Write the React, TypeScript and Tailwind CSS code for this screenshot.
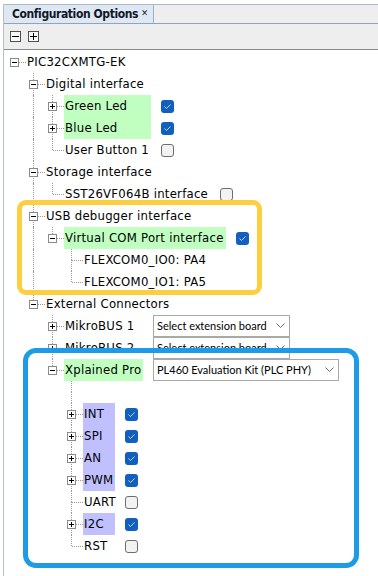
import React from "react";

type Row = {
  d: number;
  label: string;
  handle?: "minus" | "plus";
  next?: boolean;
  anc: boolean[];
  labelCls?: string;
  check?: "on" | "off";
  select?: { text: string; cls: string };
  blank?: boolean;
};

const rows: Row[] = [
  { d: 0, label: "PIC32CXMTG-EK", handle: "minus", anc: [] },
  { d: 1, label: "Digital interface", handle: "minus", next: true, anc: [false] },
  { d: 2, label: "Green Led", handle: "plus", next: true, anc: [false, true], labelCls: "w-[87px] bg-[#c0ffc0]", check: "on" },
  { d: 2, label: "Blue Led", handle: "plus", next: true, anc: [false, true], labelCls: "w-[87px] bg-[#c0ffc0]", check: "on" },
  { d: 2, label: "User Button 1", next: false, anc: [false, true], labelCls: "w-[87px]", check: "off" },
  { d: 1, label: "Storage interface", handle: "minus", next: true, anc: [false] },
  { d: 2, label: "SST26VF064B interface", next: false, anc: [false, true], labelCls: "w-[146px]", check: "off" },
  { d: 1, label: "USB debugger interface", handle: "minus", next: true, anc: [false] },
  { d: 2, label: "Virtual COM Port interface", handle: "minus", next: false, anc: [false, true], labelCls: "w-[162px] bg-[#c0ffc0]", check: "on" },
  { d: 3, label: "FLEXCOM0_IO0: PA4", next: true, anc: [false, true, false] },
  { d: 3, label: "FLEXCOM0_IO1: PA5", next: false, anc: [false, true, false] },
  { d: 1, label: "External Connectors", handle: "minus", next: false, anc: [false] },
  { d: 2, label: "MikroBUS 1", handle: "plus", next: true, anc: [false, false], labelCls: "w-[79px]", select: { text: "Select extension board", cls: "w-[137px]" } },
  { d: 2, label: "MikroBUS 2", handle: "plus", next: true, anc: [false, false], labelCls: "w-[79px]", select: { text: "Select extension board", cls: "w-[137px]" } },
  { d: 2, label: "Xplained Pro", handle: "minus", next: false, anc: [false, false], labelCls: "w-[79px] bg-[#c0ffc0]", select: { text: "PL460 Evaluation Kit (PLC PHY)", cls: "w-[186px]" } },
  { d: 3, label: "", next: true, anc: [false, false, false], blank: true },
  { d: 3, label: "INT", handle: "plus", next: true, anc: [false, false, false], labelCls: "w-[32px] bg-[#c0c0ff]", check: "on" },
  { d: 3, label: "SPI", handle: "plus", next: true, anc: [false, false, false], labelCls: "w-[32px] bg-[#c0c0ff]", check: "on" },
  { d: 3, label: "AN", handle: "plus", next: true, anc: [false, false, false], labelCls: "w-[32px] bg-[#c0c0ff]", check: "on" },
  { d: 3, label: "PWM", handle: "plus", next: true, anc: [false, false, false], labelCls: "w-[32px] bg-[#c0c0ff]", check: "on" },
  { d: 3, label: "UART", next: true, anc: [false, false, false], labelCls: "w-[32px]", check: "off" },
  { d: 3, label: "I2C", handle: "plus", next: true, anc: [false, false, false], labelCls: "w-[32px] bg-[#c0c0ff]", check: "on" },
  { d: 3, label: "RST", next: false, anc: [false, false, false], labelCls: "w-[32px]", check: "off" },
];

function HandleBox({ kind }: { kind: "minus" | "plus" }) {
  return (
    <div className="absolute left-[5px] top-[7px] w-[9px] h-[9px] border border-[#8a8a8a] bg-white">
      <div className="absolute left-[1px] top-[3px] w-[5px] h-[1px] bg-black" />
      {kind === "plus" && <div className="absolute left-[3px] top-[1px] w-[1px] h-[5px] bg-black" />}
    </div>
  );
}

function CheckBox({ on }: { on: boolean }) {
  if (on) {
    return (
      <div className="w-[13px] h-[13px] rounded-[3px] bg-[#1160c0] flex items-center justify-center shrink-0">
        <svg width="13" height="13" viewBox="0 0 13 13">
          <polyline points="3.5,6.5 5.5,8.5 9.5,4.5" fill="none" stroke="#d6e4fa" strokeWidth="0.9" />
        </svg>
      </div>
    );
  }
  return <div className="w-[13px] h-[13px] rounded-[3px] bg-[#f2f2f2] border border-[#6e6e6e] shrink-0" />;
}

function Select({ text, cls }: { text: string; cls: string }) {
  return (
    <div
      className={`${cls} ml-[10px] h-[22px] border border-[#a9a9a9] bg-white flex items-center justify-between pl-[3px] pr-[4px] shrink-0 text-[11px] text-black tracking-normal`}
      style={{ fontFamily: "Lato, 'Open Sans', sans-serif", fontStretch: "normal" }}
    >
      <span className="whitespace-nowrap">{text}</span>
      <svg width="9" height="6" viewBox="0 0 9 6" className="shrink-0">
        <polyline points="0.5,0.5 4.5,4.5 8.5,0.5" fill="none" stroke="#6a6a6a" strokeWidth="1" />
      </svg>
    </div>
  );
}

function TreeRow({ r }: { r: Row }) {
  const dot = "border-dotted border-[#9a9a9a]";
  return (
    <div className="flex h-[22px] items-center">
      {r.anc.map((on, i) => (
        <div key={i} className="relative w-[19px] h-full shrink-0">
          {on && <div className={`absolute left-[9px] top-0 bottom-0 border-l ${dot}`} />}
        </div>
      ))}
      <div className="relative w-[21px] h-full shrink-0">
        {r.d > 0 && <div className={`absolute left-[9px] top-0 h-[11px] border-l ${dot}`} />}
        {r.d > 0 && r.next && <div className={`absolute left-[9px] top-[11px] bottom-0 border-l ${dot}`} />}
        {!r.blank && <div className={`absolute left-[10px] right-0 top-[11px] border-t ${dot}`} />}
        {r.handle && <HandleBox kind={r.handle} />}
      </div>
      {!r.blank && (
        <div className={`${r.labelCls ?? ""} h-full flex items-center pl-[1px] shrink-0 whitespace-nowrap`}>
          {r.label}
        </div>
      )}
      {r.check && (
        <div className="ml-[10px]">
          <CheckBox on={r.check === "on"} />
        </div>
      )}
      {r.select && <Select text={r.select.text} cls={r.select.cls} />}
    </div>
  );
}

export default function App() {
  return (
    <div
      className="relative w-[378px] h-[576px] bg-white overflow-hidden text-[13px] text-black tracking-[0.25px]"
      style={{ fontFamily: "'DejaVu Sans Condensed', 'DejaVu Sans', sans-serif", fontStretch: "condensed" }}
    >
      <div className="ml-[3px] mt-[4px] h-[572px] border-l border-[#b8bfc8] flex flex-col">
        {/* tab header */}
        <div className="h-[20px] bg-[#eeeeee] border-t border-b border-t-[#a9bace] border-b-[#8ea4bd] flex">
          <div className="h-full bg-[#dfe7f3] border-r border-[#9fb0c6] flex items-center pl-[8px] pr-[5px] w-[150px]">
            <span className="font-bold text-[12px] tracking-[-0.4px] text-[#101828] whitespace-nowrap">Configuration Options</span>
            <span className="ml-auto font-bold text-[9px] text-[#222] tracking-normal">✕</span>
          </div>
        </div>
        {/* toolbar */}
        <div className="h-[26px] bg-[#eeeeee] border-b border-[#8a8a8a] flex items-center gap-[7px] pl-[6px]">
          <div className="relative w-[11px] h-[11px] border border-[#505050] bg-[#fafafa]">
            <div className="absolute left-[1px] top-[4px] w-[7px] h-[1px] bg-black" />
          </div>
          <div className="relative w-[11px] h-[11px] border border-[#505050] bg-[#fafafa]">
            <div className="absolute left-[1px] top-[4px] w-[7px] h-[1px] bg-black" />
            <div className="absolute left-[4px] top-[1px] w-[1px] h-[7px] bg-black" />
          </div>
        </div>
        {/* tree */}
        <div className="pt-[1px] pl-[1px]">
          {rows.map((r, i) => (
            <TreeRow key={i} r={r} />
          ))}
        </div>
      </div>

      {/* highlight overlays */}
      <div className="absolute left-[17px] top-[200px] w-[245px] h-[95px] border-[5px] border-[#fdcf3e] rounded-[9px] pointer-events-none" />
      <div className="absolute left-[23px] top-[348px] w-[336px] h-[220px] border-[5px] border-[#1e9be6] rounded-[13px] pointer-events-none" />
    </div>
  );
}
